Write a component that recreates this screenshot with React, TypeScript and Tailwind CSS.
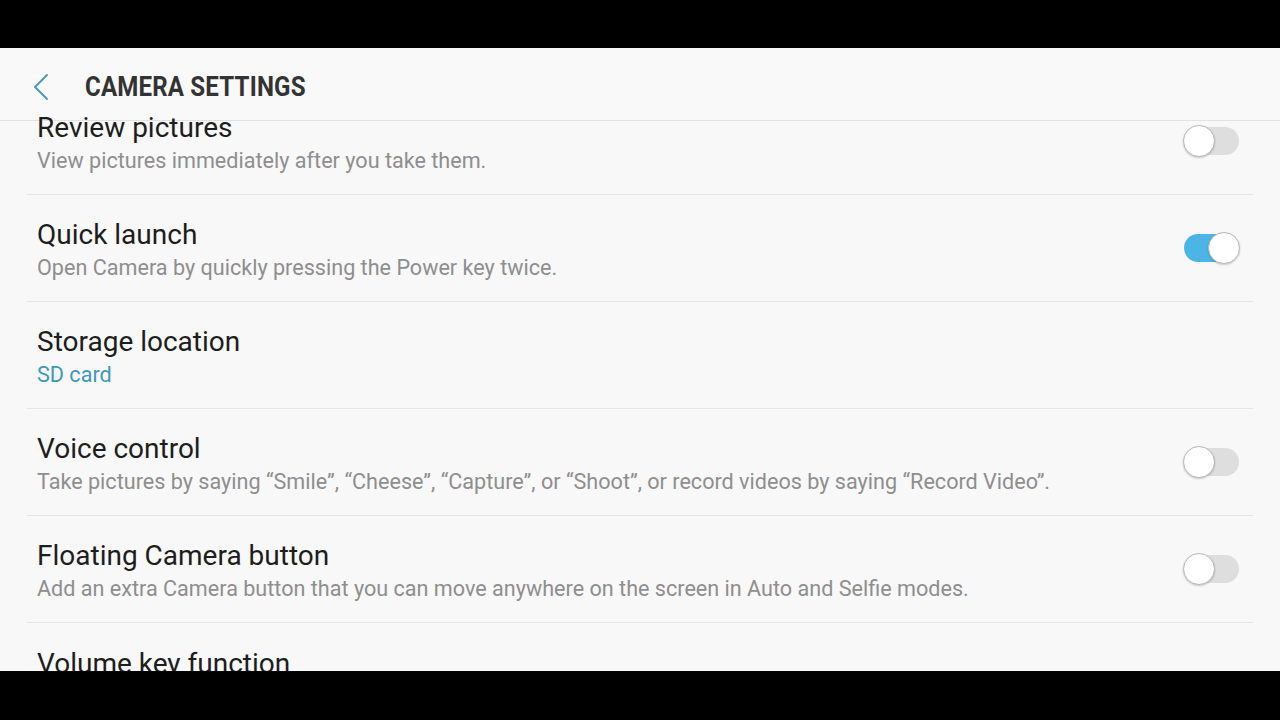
import { ChevronLeft } from "lucide-react";

interface Setting {
  title: string;
  desc?: string;
  toggle?: boolean;
  on?: boolean;
  accent?: boolean;
}

const settings: Setting[] = [
  { title: "Review pictures", desc: "View pictures immediately after you take them.", toggle: true },
  { title: "Quick launch", desc: "Open Camera by quickly pressing the Power key twice.", toggle: true, on: true },
  { title: "Storage location", desc: "SD card", accent: true },
  {
    title: "Voice control",
    desc: "Take pictures by saying \u201cSmile\u201d, \u201cCheese\u201d, \u201cCapture\u201d, or \u201cShoot\u201d, or record videos by saying \u201cRecord Video\u201d.",
    toggle: true,
  },
  {
    title: "Floating Camera button",
    desc: "Add an extra Camera button that you can move anywhere on the screen in Auto and Selfie modes.",
    toggle: true,
  },
  { title: "Volume key function" },
];

function Toggle({ on }: { on?: boolean }) {
  return (
    <div className="relative h-[32px] w-[57px]">
      <div
        className={
          "absolute left-[1px] right-[1px] top-[2px] h-[28px] rounded-full " +
          (on ? "bg-[#4db5e6]" : "bg-[#dedede]")
        }
      />
      <div
        className={
          "absolute top-0 h-[32px] w-[32px] rounded-full border border-[#b9b9b9] bg-white shadow-[0_1px_2px_rgba(0,0,0,0.2)] " +
          (on ? "right-0" : "left-0")
        }
      />
    </div>
  );
}

export default function App() {
  return (
    <div className="flex h-[720px] w-[1280px] flex-col bg-black font-['Roboto',sans-serif]">
      <div className="h-[48px] shrink-0" />
      <div className="flex h-[623px] shrink-0 flex-col overflow-hidden bg-[#f8f8f8]">
        <div className="flex h-[73px] shrink-0 items-center border-b border-[#e2e2e2] bg-[#f9f9f9] pt-[5px]">
          <ChevronLeft className="ml-[17px] h-[48px] w-[48px] text-[#4a9cb8]" strokeWidth={1} />
          <h1 className="ml-[20px] origin-left scale-x-[0.86] text-[28px] font-bold tracking-[0.2px] text-[#333333]">
            CAMERA SETTINGS
          </h1>
        </div>
        <div className="-mt-[33px] px-[27px]">
          {settings.map((s, i) => (
            <div
              key={s.title}
              className={
                "flex h-[107px] items-center justify-between " +
                (i < settings.length - 1 ? "border-b border-[#e6e6e6]" : "")
              }
            >
              <div className={"flex flex-col pl-[10px] " + (s.desc ? "pt-[6px]" : "pb-[26px]")}>
                <div className="text-[28px] leading-[34px] text-[#1d1d1d]">{s.title}</div>
                {s.desc && (
                  <div
                    className={
                      "text-[21.6px] leading-[32px] " + (s.accent ? "text-[#3f99b9]" : "text-[#8e8e8e]")
                    }
                  >
                    {s.desc}
                  </div>
                )}
              </div>
              {s.toggle && (
                <div className="mr-[13px]">
                  <Toggle on={s.on} />
                </div>
              )}
            </div>
          ))}
        </div>
      </div>
      <div className="flex-1" />
    </div>
  );
}
